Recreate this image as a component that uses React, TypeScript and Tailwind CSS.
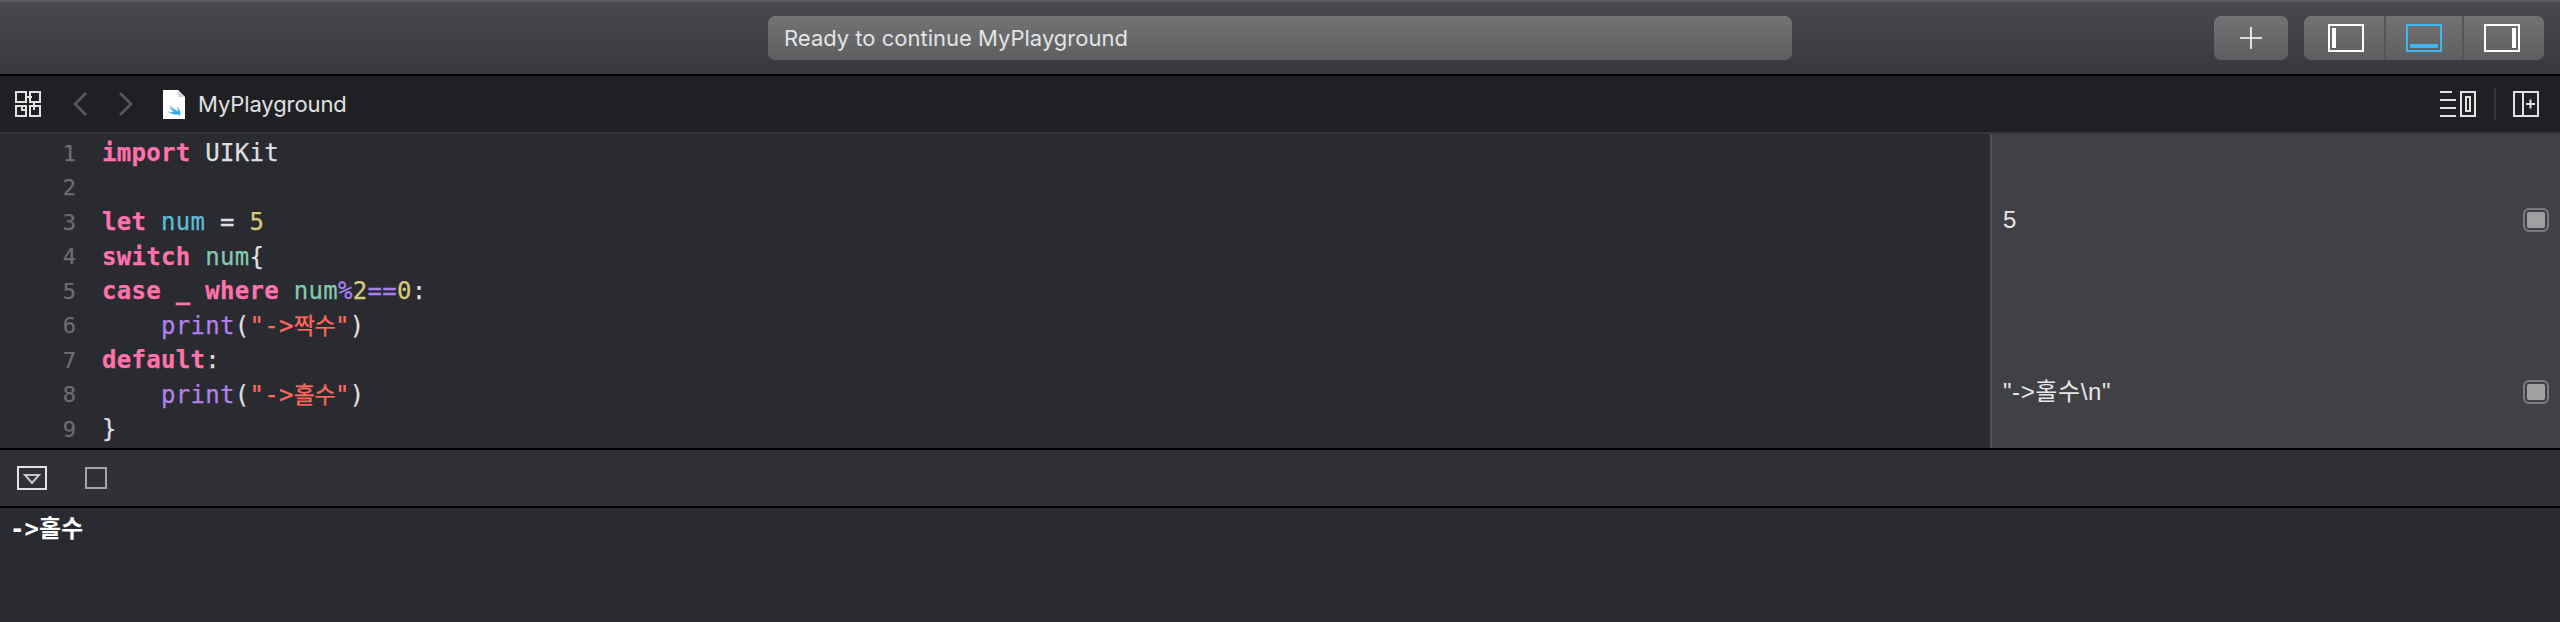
const mono = "font-['DejaVu_Sans_Mono','Noto_Sans_CJK_KR',monospace]";

const Kw = ({ children }: { children: React.ReactNode }) => <span className="font-bold text-[#ff72ac]">{children}</span>;
const Kr = ({ children }: { children: React.ReactNode }) => (
  <span className="font-['Noto_Sans_CJK_KR',sans-serif] text-[23px] tracking-[-0.5px]">{children}</span>
);

const lines: React.ReactNode[] = [
  <>
    <Kw>import</Kw> UIKit
  </>,
  <></>,
  <>
    <Kw>let</Kw> <span className="text-[#5dbcd8]">num</span> = <span className="text-[#d9c97c]">5</span>
  </>,
  <>
    <Kw>switch</Kw> <span className="text-[#83c9b0]">num</span>
    {"{"}
  </>,
  <>
    <Kw>case</Kw> <Kw>_</Kw> <Kw>where</Kw> <span className="text-[#83c9b0]">num</span>
    <span className="text-[#a67ff0]">%</span>
    <span className="text-[#d9c97c]">2</span>
    <span className="text-[#a67ff0]">==</span>
    <span className="text-[#d9c97c]">0</span>:
  </>,
  <>
    {"    "}
    <span className="text-[#b281eb]">print</span>(
    <span className="text-[#fc6a5d]">
      "-&gt;<Kr>짝수</Kr>"
    </span>
    )
  </>,
  <>
    <Kw>default</Kw>:
  </>,
  <>
    {"    "}
    <span className="text-[#b281eb]">print</span>(
    <span className="text-[#fc6a5d]">
      "-&gt;<Kr>홀수</Kr>"
    </span>
    )
  </>,
  <>{"}"}</>,
];

const SidebarIcon = ({ side, active }: { side: "left" | "bottom" | "right"; active?: boolean }) => {
  const c = active ? "#3fb4f2" : "#ffffff";
  return (
    <svg width="36" height="28" viewBox="0 0 36 28">
      <rect x="1" y="1" width="34" height="26" fill="none" stroke={c} strokeWidth="2" />
      {side === "left" && <rect x="4" y="4" width="4" height="20" fill={c} />}
      {side === "right" && <rect x="28" y="4" width="4" height="20" fill={c} />}
      {side === "bottom" && <rect x="4" y="20" width="28" height="4" fill={c} />}
    </svg>
  );
};

const ValueChip = () => (
  <div className="w-[26px] h-[24px] p-[2px] rounded-[6px] border-2 border-[#7a7b7e]">
    <div className="w-full h-full rounded-[2px] bg-[#a0a0a2]" />
  </div>
);

export default function App() {
  return (
    <div className="w-[2560px] h-[622px] flex flex-col overflow-hidden bg-[#2a2b30] font-['Inter',sans-serif]">
      {/* window toolbar */}
      <header className="h-[76px] shrink-0 flex items-start border-t-2 border-b-2 border-t-[#5c5c5e] border-b-black bg-gradient-to-b from-[#48494c] to-[#38393c] pt-[14px] pr-[16px]">
        <div className="ml-[768px] w-[1024px] h-[44px] flex items-center pl-[16px] rounded-[7px] bg-gradient-to-b from-[#727375] to-[#5d5e60] text-[22px] tracking-[0px] text-[#e4e4e5]">
          Ready to continue MyPlayground
        </div>
        <button className="ml-[422px] w-[74px] h-[44px] flex items-center justify-center rounded-[7px] bg-gradient-to-b from-[#727375] to-[#5d5e60]">
          <svg width="24" height="24" viewBox="0 0 24 24">
            <path d="M12 1v22M1 12h22" stroke="#fff" strokeWidth="1.6" />
          </svg>
        </button>
        <div className="ml-[16px] w-[240px] h-[44px] flex rounded-[7px] bg-gradient-to-b from-[#727375] to-[#5d5e60]">
          <div className="w-[82px] flex items-center pl-[24px] border-r-2 border-[#545557]">
            <SidebarIcon side="left" />
          </div>
          <div className="w-[78px] flex items-center pl-[20px] border-r-2 border-[#545557]">
            <SidebarIcon side="bottom" active />
          </div>
          <div className="flex-1 flex items-center pl-[20px]">
            <SidebarIcon side="right" />
          </div>
        </div>
      </header>

      {/* jump bar */}
      <nav className="h-[58px] shrink-0 flex items-center border-b-2 border-[#35363a] bg-[#1f2024] pl-[15px] pr-[21px]">
        <svg width="26" height="26" viewBox="0 0 26 26" fill="none" stroke="#e2e2e3" strokeWidth="2">
          <path d="M1 1h10v10H1zM15 1h10v10H15zM1 15h10v10H1zM15 15h10v10H15z" />
          <path d="M11 6h6M19 11v8M7 15v4h4" />
        </svg>
        <svg className="ml-[32px]" width="14" height="24" viewBox="0 0 14 24" fill="none" stroke="#57585c" strokeWidth="2.6">
          <path d="M13 1L2 12l11 11" />
        </svg>
        <svg className="ml-[32px]" width="14" height="24" viewBox="0 0 14 24" fill="none" stroke="#57585c" strokeWidth="2.6">
          <path d="M1 1l11 11L1 23" />
        </svg>
        <svg className="ml-[30px]" width="22" height="29" viewBox="0 0 22 29">
          <path d="M0 0h15l7 7v22H0z" fill="#fff" />
          <path d="M15 0v7h7z" fill="#d5d5d7" />
          <g transform="translate(4 13)">
            <path
              d="M0 8C3 10.500 6.500 12 9 11.500 10.500 11.200 12 11.500 13 13 14 10 13 7 10 3.500 11 6 11 7.500 10.500 8.500 8 7 4.500 3.500 2.500 1.500 4 4 5.500 5.500 7 7 5 5.800 3 4 1.500 3 3 5 5 7.500 7 9 4.500 9.800 2 9 0 8Z"
              fill="#2fa8ee"
            />
          </g>
        </svg>
        <span className="ml-[13px] text-[22px] tracking-[-0.1px] text-[#e1e1e2]">MyPlayground</span>
        <div className="ml-auto flex items-center">
          <svg width="36" height="26" viewBox="0 0 36 26" fill="none" stroke="#e2e2e3" strokeWidth="2">
            <path d="M0 1h12M0 9h16M0 17h16M0 25h16" />
            <rect x="21" y="1" width="14" height="24" />
            <rect x="26" y="6" width="4" height="14" />
          </svg>
          <div className="ml-[18px] w-[2px] h-[32px] bg-[#35363a]" />
          <svg className="ml-[17px]" width="26" height="26" viewBox="0 0 26 26" fill="none" stroke="#e2e2e3" strokeWidth="2">
            <rect x="1" y="1" width="24" height="24" />
            <path d="M10 1v24M13 13h9M17.500 8.500v9" />
          </svg>
        </div>
      </nav>

      {/* editor + results */}
      <section className="h-[314px] shrink-0 flex">
        <div className="flex-1 bg-[#2a2b30] pt-[2px]">
          {lines.map((line, i) => (
            <div key={i} className={`flex h-[34.5px] items-center ${mono} text-[24px] tracking-[0.3px] text-[#dfdfe0] [-webkit-text-stroke:0.25px]`}>
              <span className="w-[76px] shrink-0 text-right text-[22px] tracking-[0px] text-[#6c6d72]">{i + 1}</span>
              <span className="ml-[26px] whitespace-pre">{line}</span>
            </div>
          ))}
        </div>
        <aside className="w-[570px] shrink-0 border-l-2 border-[#505155] bg-[#404145] pl-[11px] pr-[11px] text-[24px] text-[#e7e7e8] font-['Liberation_Sans','Noto_Sans_CJK_KR',sans-serif]">
          <div className="mt-[71px] h-[30px] flex items-center justify-between">
            <span>5</span>
            <ValueChip />
          </div>
          <div className="mt-[142px] h-[30px] flex items-center justify-between">
            <span className="tracking-[0.6px]">"-&gt;홀수\n"</span>
            <ValueChip />
          </div>
        </aside>
      </section>

      {/* debug bar */}
      <div className="h-[60px] shrink-0 flex items-center border-t-2 border-b-2 border-black bg-[#303136] pl-[17px]">
        <svg width="30" height="24" viewBox="0 0 30 24" fill="none">
          <rect x="1" y="1" width="28" height="22" stroke="#e2e2e3" strokeWidth="2" />
          <path d="M8 9h14l-7 8z" stroke="#c8c8ca" strokeWidth="2" />
        </svg>
        <div className="ml-[38px] w-[22px] h-[22px] border-2 border-[#a5a5a7]" />
      </div>

      {/* console */}
      <div className="flex-1 bg-[#2a2b30] pl-[10px] pt-[3px] font-['DejaVu_Sans_Mono','Noto_Sans_CJK_KR',sans-serif] text-[24px] leading-[32px] font-bold text-white">
        -&gt;<span className="font-['Noto_Sans_CJK_KR',sans-serif]">홀수</span>
      </div>
    </div>
  );
}
